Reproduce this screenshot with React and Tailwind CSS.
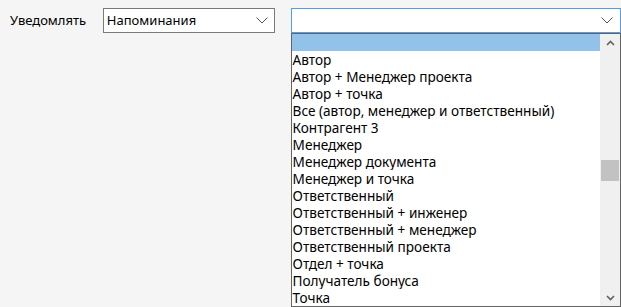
import React from "react";

const items = [
  "Автор",
  "Автор + Менеджер проекта",
  "Автор + точка",
  "Все (автор, менеджер и ответственный)",
  "Контрагент 3",
  "Менеджер",
  "Менеджер документа",
  "Менеджер и точка",
  "Ответственный",
  "Ответственный + инженер",
  "Ответственный + менеджер",
  "Ответственный проекта",
  "Отдел + точка",
  "Получатель бонуса",
  "Точка",
];

function Chevron() {
  return (
    <svg width="12" height="7" viewBox="0 0 12 7" className="block">
      <path d="M0.5 0.5 L6 6 L11.5 0.5" fill="none" stroke="#555" strokeWidth="1" />
    </svg>
  );
}

function SmallArrow({ up }) {
  return (
    <svg width="9" height="6" viewBox="0 0 9 6" className="block">
      <path
        d={up ? "M1 5 L4.5 1.5 L8 5" : "M1 1 L4.5 4.5 L8 1"}
        fill="none"
        stroke="#606060"
        strokeWidth="1.6"
      />
    </svg>
  );
}

export default function App() {
  return (
    <div
      className="w-[621px] h-[307px] bg-[#f5f5f5] overflow-hidden text-[13px] text-black"
      style={{ fontFamily: '"Noto Sans", "Liberation Sans", sans-serif' }}
    >
      <div className="flex items-start pt-[8px]">
        <div className="ml-[10px] w-[93px] h-[25px] flex items-center">Уведомлять</div>
        <div className="w-[172px] h-[25px] border border-[#7a7a7a] bg-white flex items-center pl-[3px] pr-[6px]">
          <span className="flex-1 leading-none">Напоминания</span>
          <Chevron />
        </div>
        <div className="ml-[16px] w-[331px] flex flex-col">
          <div className="h-[25px] border border-[#569de5] bg-white flex items-center justify-end pr-[7px]">
            <Chevron />
          </div>
          <div className="h-[274px] border border-[#646464] bg-white flex">
            <div className="flex-1 flex flex-col text-[13.6px]">
              <div className="h-[17px] bg-[#92c1e9]" />
              {items.map((t) => (
                <div key={t} className="h-[17px] pl-[1px] leading-[17px] whitespace-nowrap overflow-hidden">
                  {t}
                </div>
              ))}
            </div>
            <div className="w-[20px] bg-[#f0f0f0] flex flex-col items-center">
              <div className="h-[17px] flex items-center justify-center">
                <SmallArrow up />
              </div>
              <div className="flex-1 w-full relative">
                <div className="mt-[109px] mx-[1px] h-[21px] bg-[#c2c2c2]" />
              </div>
              <div className="h-[17px] flex items-center justify-center">
                <SmallArrow />
              </div>
            </div>
          </div>
        </div>
      </div>
    </div>
  );
}
